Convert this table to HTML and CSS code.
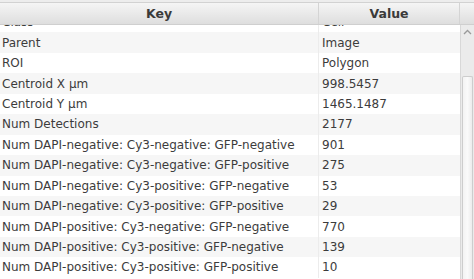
FILE: index.html
```html
<!DOCTYPE html>
<html lang="en">

<head>
    <meta charset="UTF-8">
    <title>Measurements</title>
    <link rel="stylesheet" href="styles.css">
</head>

<body>
    <div class="table">
        <div class="top-edge"></div>
        <div class="header">
            <div class="head-cell key">Key</div>
            <div class="head-cell value">Value</div>
            <div class="head-corner"></div>
        </div>
        <div class="body">
            <div class="viewport">
                <div class="rows">
                    <div class="row"><span class="cell key">Class</span><span class="cell value">Cell</span></div>
                    <div class="row"><span class="cell key">Parent</span><span class="cell value">Image</span></div>
                    <div class="row"><span class="cell key">ROI</span><span class="cell value">Polygon</span></div>
                    <div class="row"><span class="cell key">Centroid X µm</span><span class="cell value">998.5457</span></div>
                    <div class="row"><span class="cell key">Centroid Y µm</span><span class="cell value">1465.1487</span></div>
                    <div class="row"><span class="cell key">Num Detections</span><span class="cell value">2177</span></div>
                    <div class="row"><span class="cell key">Num DAPI-negative: Cy3-negative: GFP-negative</span><span class="cell value">901</span></div>
                    <div class="row"><span class="cell key">Num DAPI-negative: Cy3-negative: GFP-positive</span><span class="cell value">275</span></div>
                    <div class="row"><span class="cell key">Num DAPI-negative: Cy3-positive: GFP-negative</span><span class="cell value">53</span></div>
                    <div class="row"><span class="cell key">Num DAPI-negative: Cy3-positive: GFP-positive</span><span class="cell value">29</span></div>
                    <div class="row"><span class="cell key">Num DAPI-positive: Cy3-negative: GFP-negative</span><span class="cell value">770</span></div>
                    <div class="row"><span class="cell key">Num DAPI-positive: Cy3-positive: GFP-negative</span><span class="cell value">139</span></div>
                    <div class="row"><span class="cell key">Num DAPI-positive: Cy3-positive: GFP-positive</span><span class="cell value">10</span></div>
                </div>
            </div>
            <div class="scrollbar">
                <div class="arrow">
                    <svg width="9" height="6" viewBox="0 0 9 6">
                        <path d="M1 5 L4.5 1.5 L8 5" fill="none" stroke="#9a9a9a" stroke-width="1.3" />
                    </svg>
                </div>
                <div class="thumb"></div>
            </div>
        </div>
    </div>
</body>

</html>
```

FILE: styles.css
```css
body {
    margin: 0;
    width: 474px;
    height: 279px;
    overflow: hidden;
    background: #ffffff;
    font-family: 'DejaVu Sans', sans-serif;
}

.table {
    display: flex;
    flex-direction: column;
    height: 279px;
}

.top-edge {
    height: 2px;
    background: #ededed;
    border-bottom: 1px solid #d2d2d2;
}

/* Header */
.header {
    display: flex;
    height: 21px;
    background: linear-gradient(#f5f5f5, #dedede);
    border-bottom: 1px solid #cfcfcf;
}

.head-cell {
    display: flex;
    align-items: center;
    justify-content: center;
    font-size: 12.5px;
    font-weight: bold;
    color: #3a3a3a;
}

.head-cell.key {
    width: 318px;
    border-right: 1px solid #d4d4d4;
}

.head-cell.value {
    width: 140px;
    border-right: 1px solid #d4d4d4;
}

.head-corner {
    flex: 1;
}

/* Body */
.body {
    display: flex;
    flex: 1;
    min-height: 0;
}

.viewport {
    width: 460px;
    overflow: hidden;
}

.rows {
    margin-top: -13px;
}

.row {
    display: flex;
    height: 20.45px;
    align-items: center;
    font-size: 12px;
    color: #3c3c3c;
}

.row:nth-child(even) {
    background: #f6f6f6;
}

.cell {
    white-space: nowrap;
}

.cell.key {
    width: 316px;
    padding-left: 2px;
    border-right: 1px solid #ececec;
    align-self: stretch;
    display: flex;
    align-items: center;
}

.cell.value {
    padding-left: 3px;
}

/* Scrollbar */
.scrollbar {
    flex: 1;
    display: flex;
    flex-direction: column;
    align-items: center;
    background: #ebebeb;
    border-left: 1px solid #d8d8d8;
}

.arrow {
    height: 14px;
    display: flex;
    align-items: center;
}

.thumb {
    margin-top: 37px;
    flex: 1;
    width: 9px;
    background: linear-gradient(90deg, #f3f3f3, #fafafa, #ececec);
    border: 1px solid #cdcdcd;
    border-bottom: none;
    border-radius: 2px 2px 0 0;
}
```
